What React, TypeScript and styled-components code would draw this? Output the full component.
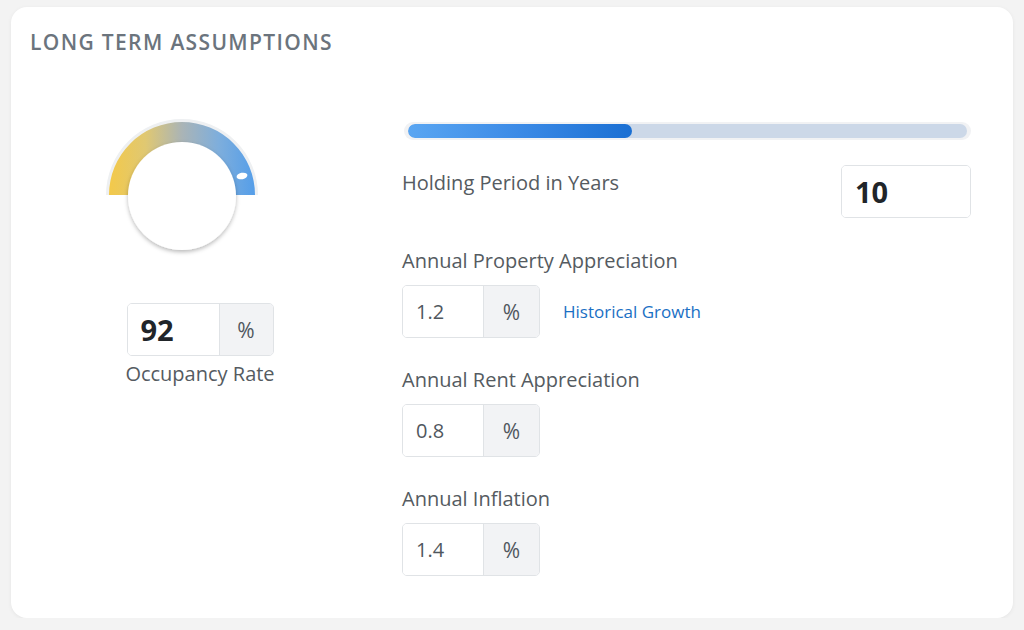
import React from 'react';
import styled, { createGlobalStyle } from 'styled-components';

const GlobalStyle = createGlobalStyle`
    html, body {
        margin: 0;
        padding: 0;
        background: #f3f3f3;
    }
    body {
        font-family: 'Open Sans', 'Noto Sans', sans-serif;
    }
`;

const StyledCard = styled.section`
    box-sizing: border-box;
    width: 1002px;
    height: 611px;
    margin: 7px 0 0 11px;
    padding: 21px 42px 0 19px;
    background: #FFF;
    border-radius: 16px;
    box-shadow: 0px 1px 4px rgba(0, 0, 0, 0.06);
`;

const StyledTitle = styled.h2`
    margin: 0;
    font-family: 'Open Sans', sans-serif;
    font-weight: 600;
    font-size: 21px;
    line-height: 28px;
    color: #6b747d;
    letter-spacing: 1.35px;
`;

const StyledBody = styled.div`
    display: flex;
    flex-direction: row;
    gap: 32px;
`;

const StyledLeft = styled.div`
    width: 340px;
    display: flex;
    flex-direction: column;
    align-items: center;
    padding-top: 49px;
`;

const StyledGauge = styled.svg`
    display: block;
    width: 200px;
    height: 170px;
    margin-bottom: 28px;
`;

const StyledRight = styled.div`
    width: 569px;
    display: flex;
    flex-direction: column;
    padding-top: 66px;
`;

const StyledTrack = styled.div`
    box-sizing: border-box;
    margin-left: 2px;
    height: 18px;
    padding: 2px 4px;
    background: #f1f2f4;
    border-radius: 9px;
    margin-bottom: 25px;
`;

const StyledTrackInner = styled.div`
    height: 14px;
    background: #ccd8e8;
    border-radius: 7px;
    overflow: hidden;
`;

const StyledFill = styled.div`
    height: 100%;
    border-radius: 7px;
    background: linear-gradient(90deg, #5aa6f2 0%, #3b8ae6 50%, #1a6fd3 100%);
`;

const StyledHoldingRow = styled.div`
    display: flex;
    flex-direction: row;
    justify-content: space-between;
    align-items: flex-start;
    margin-bottom: 30px;
`;

const StyledLabel = styled.div<{ $top?: number }>`
    font-size: 20px;
    line-height: 26px;
    color: #555b61;
    padding-top: ${p => p.$top ?? 0}px;
`;

const StyledField = styled.div`
    display: flex;
    flex-direction: column;
    gap: 11px;
    margin-bottom: 29px;
`;

const StyledFieldRow = styled.div`
    display: flex;
    flex-direction: row;
    align-items: center;
    gap: 23px;
`;

const StyledGroup = styled.div`
    display: flex;
    flex-direction: row;
    height: 53px;
    box-sizing: border-box;
    border: 1px solid #e0e3e6;
    border-radius: 5px;
    overflow: hidden;
`;

const StyledValue = styled.div<{ $width: number; $bold?: boolean }>`
    box-sizing: border-box;
    width: ${p => p.$width}px;
    height: 100%;
    display: flex;
    align-items: center;
    padding-left: 13px;
    background: #FFF;
    font-size: ${p => (p.$bold ? 29 : 20)}px;
    font-weight: ${p => (p.$bold ? 700 : 400)};
    color: ${p => (p.$bold ? '#212529' : '#50575e')};
`;

const StyledAddon = styled.div<{ $width: number }>`
    box-sizing: border-box;
    width: ${p => p.$width}px;
    height: 100%;
    display: flex;
    align-items: center;
    justify-content: center;
    background: #f2f3f5;
    border-left: 1px solid #e0e3e6;
    font-size: 21px;
    color: #50575e;
`;

const StyledCaption = styled.div`
    margin-top: 5px;
    font-size: 20px;
    line-height: 26px;
    color: #555b61;
`;

const StyledLink = styled.a`
    font-size: 17px;
    color: #1a6fc4;
    text-decoration: none;
    cursor: pointer;
`;

type PercentFieldProps = {
    label: string;
    value: string;
    link?: string;
};

function Gauge() {
    const cx = 82;
    const cy = 90;
    return (
        <StyledGauge viewBox="0 0 200 170">
            <defs>
                <linearGradient id="gaugeGrad" x1="0" y1="0" x2="1" y2="0">
                    <stop offset="0%" stopColor="#f3c94a" />
                    <stop offset="25%" stopColor="#e0c872" />
                    <stop offset="50%" stopColor="#aab4b6" />
                    <stop offset="75%" stopColor="#7eaedc" />
                    <stop offset="100%" stopColor="#559ee9" />
                </linearGradient>
                <filter id="knobShadow" x="-30%" y="-30%" width="160%" height="160%">
                    <feDropShadow dx="0" dy="2" stdDeviation="2.2" floodColor="#000" floodOpacity="0.28" />
                </filter>
            </defs>
            <path
                d={`M ${cx - 76} ${cy} A 76 76 0 0 1 ${cx + 76} ${cy} L ${cx + 52} ${cy} A 52 52 0 0 0 ${cx - 52} ${cy} Z`}
                fill="#eef0f2"
            />
            <path
                d={`M ${cx - 73} ${cy} A 73 73 0 0 1 ${cx + 73} ${cy} L ${cx + 52} ${cy} A 52 52 0 0 0 ${cx - 52} ${cy} Z`}
                fill="url(#gaugeGrad)"
            />
            <ellipse
                cx={cx + 60}
                cy={cy - 19}
                rx="5.5"
                ry="3.2"
                fill="#FFF"
                transform={`rotate(-12 ${cx + 60} ${cy - 19})`}
            />
            <circle cx={cx} cy={cy + 1} r="54" fill="#FFF" filter="url(#knobShadow)" />
        </StyledGauge>
    );
}

function PercentField({ label, value, link }: PercentFieldProps) {
    return (
        <StyledField>
            <StyledLabel>{label}</StyledLabel>
            <StyledFieldRow>
                <StyledGroup>
                    <StyledValue $width={80}>{value}</StyledValue>
                    <StyledAddon $width={56}>%</StyledAddon>
                </StyledGroup>
                {link && <StyledLink>{link}</StyledLink>}
            </StyledFieldRow>
        </StyledField>
    );
}

const holdingYears = 10;
const maxYears = 25;

export default function App() {
    return (
        <>
            <GlobalStyle />
            <StyledCard>
                <StyledTitle>LONG TERM ASSUMPTIONS</StyledTitle>
                <StyledBody>
                    <StyledLeft>
                        <Gauge />
                        <StyledGroup>
                            <StyledValue $width={91} $bold>92</StyledValue>
                            <StyledAddon $width={54}>%</StyledAddon>
                        </StyledGroup>
                        <StyledCaption>Occupancy Rate</StyledCaption>
                    </StyledLeft>
                    <StyledRight>
                        <StyledTrack>
                            <StyledTrackInner>
                                <StyledFill style={{ width: `${(holdingYears / maxYears) * 100}%` }} />
                            </StyledTrackInner>
                        </StyledTrack>
                        <StyledHoldingRow>
                            <StyledLabel $top={5}>Holding Period in Years</StyledLabel>
                            <StyledGroup>
                                <StyledValue $width={128} $bold>{holdingYears}</StyledValue>
                            </StyledGroup>
                        </StyledHoldingRow>
                        <PercentField label="Annual Property Appreciation" value="1.2" link="Historical Growth" />
                        <PercentField label="Annual Rent Appreciation" value="0.8" />
                        <PercentField label="Annual Inflation" value="1.4" />
                    </StyledRight>
                </StyledBody>
            </StyledCard>
        </>
    );
}
